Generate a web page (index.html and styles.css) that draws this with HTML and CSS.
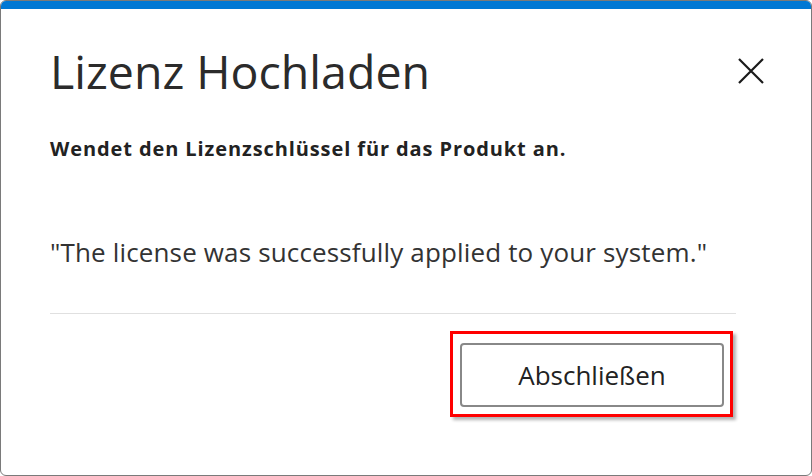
FILE: index.html
```html
<!DOCTYPE html>
<html>
<head>
    <meta charset="UTF-8">
    <title>Lizenz Hochladen</title>
    <link rel="stylesheet" href="styles.css">
</head>
<body>
    <div class="dialog">
        <div class="accent"></div>
        <div class="content">
            <div class="header">
                <h1 class="title">Lizenz Hochladen</h1>
                <button class="close" aria-label="Schließen">
                    <svg width="26" height="26" viewBox="0 0 26 26">
                        <path d="M1 1 L25 25 M25 1 L1 25" stroke="#1a1a1a" stroke-width="2.2" fill="none"/>
                    </svg>
                </button>
            </div>
            <p class="subtitle">Wendet den Lizenzschlüssel für das Produkt an.</p>
            <p class="message">"The license was successfully applied to your system."</p>
            <hr class="divider">
            <div class="footer">
                <div class="highlight">
                    <button class="btn">Abschließen</button>
                </div>
            </div>
        </div>
    </div>
</body>
</html>
```

FILE: styles.css
```css
html, body {
    height: 100%;
    margin: 0;
    padding: 0;
}
body {
    font-family: "Open Sans", "Noto Sans", sans-serif;
    background: #fff;
    color: #333;
}
.dialog {
    width: 812px;
    height: 476px;
    box-sizing: border-box;
    border: 1px solid #7a7a7a;
    border-radius: 6px;
    overflow: hidden;
    background: #fff;
}
.accent {
    height: 8px;
    background: #0078d4;
}
.content {
    padding: 0 75px 0 49px;
}
.header {
    display: flex;
    justify-content: space-between;
    align-items: center;
    margin-top: 32px;
}
.title {
    margin: 0;
    font-size: 46.5px;
    font-weight: 400;
    line-height: 60px;
    color: #2b2b2b;
}
.close {
    border: none;
    background: none;
    padding: 0;
    margin-right: -28px;
    width: 26px;
    height: 26px;
    cursor: pointer;
}
.subtitle {
    margin: 35px 0 0;
    font-size: 20px;
    font-weight: 700;
    letter-spacing: 0.9px;
    line-height: 26px;
    color: #222;
}
.message {
    margin: 74px 0 0;
    font-size: 26px;
    letter-spacing: 0.15px;
    line-height: 32px;
    color: #333;
}
.divider {
    margin: 45px 0 0;
    border: none;
    border-top: 1px solid #e0e0e0;
}
.footer {
    display: flex;
    justify-content: flex-end;
    margin-top: 17px;
}
.highlight {
    border: 3px solid #f00;
    padding: 9px 6px 7px 7px;
    box-shadow: 3px 3px 3px rgba(0, 0, 0, 0.3);
    margin-right: 3px;
}
.btn {
    display: block;
    width: 264px;
    height: 64px;
    border: 2px solid #888;
    border-radius: 4px;
    background: #fff;
    font-family: inherit;
    font-size: 26px;
    color: #222;
    cursor: pointer;
}
```
